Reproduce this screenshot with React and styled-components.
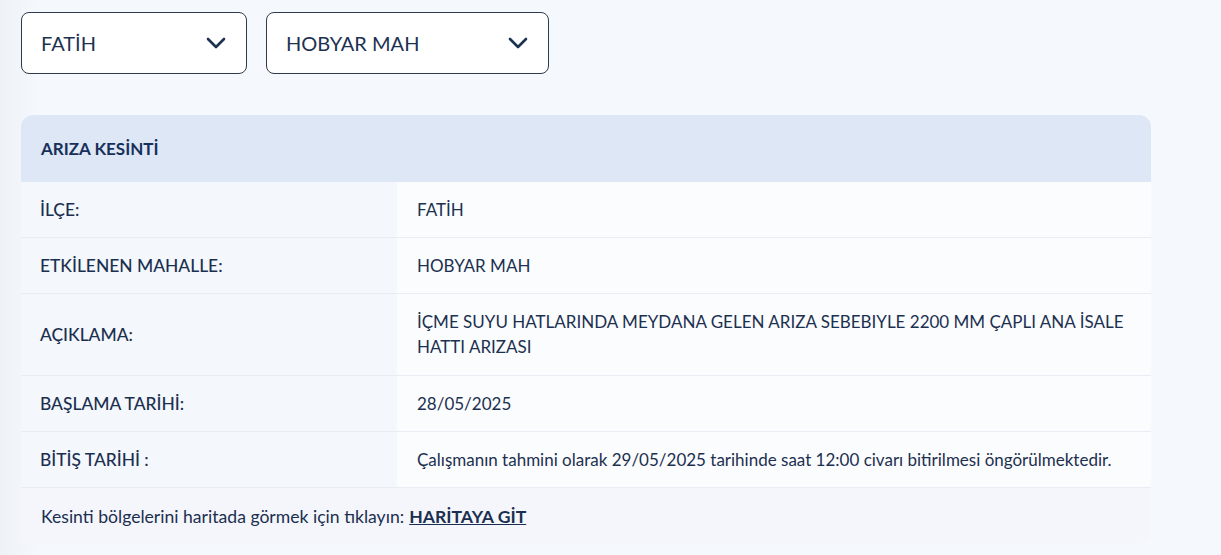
import styled, { createGlobalStyle } from 'styled-components';

const GlobalStyle = createGlobalStyle`
    body {
        margin: 0;
        background: #f5f8fc;
        font-family: Lato, "Noto Sans", sans-serif;
        color: #1c3050;
    }
`

const Page = styled.div`
    padding: 12px 21px;
    min-height: 555px;
    box-sizing: border-box;
    background: linear-gradient(90deg, #eef2f7 0, #f5f8fc 40px);
`

const Filters = styled.div`
    display: flex;
    gap: 19px;
`

const Select = styled.div`
    width: ${p => p.$width}px;
    height: 62px;
    box-sizing: border-box;
    border: 1px solid #2e3b4c;
    border-radius: 8px;
    background: #fff;
    display: flex;
    align-items: center;
    justify-content: space-between;
    padding: 0 20px 0 19px;
    font-size: 20px;
    color: #1d3251;
`

const Card = styled.div`
    margin-top: 41px;
    width: 1130px;
    border-radius: 12px;
    overflow: hidden;
    background: #fbfcfe;
`

const Header = styled.div`
    height: 67px;
    display: flex;
    align-items: center;
    padding: 0 20px;
    background: #dde7f6;
    font-weight: 700;
    font-size: 17px;
    color: #17305a;
`

const Row = styled.div`
    display: grid;
    grid-template-columns: 376px 1fr;
    min-height: 55px;
    border-bottom: 1px solid #e9edf3;
`

const Label = styled.div`
    display: flex;
    align-items: center;
    padding: 0 19px;
    background: #f4f7fb;
    font-weight: 500;
    font-size: 17.4px;
    color: #1b2f50;
`

const Value = styled.div`
    display: flex;
    align-items: center;
    padding: 15px 14px 16px 20px;
    font-size: 17px;
    line-height: 25px;
    color: #1c3050;
    ${p => p.$single && 'padding-bottom: 15px;'}
`

const Footer = styled.div`
    height: 56px;
    display: flex;
    align-items: center;
    padding: 0 20px;
    background: #f4f6fb;
    font-size: 17.6px;
    color: #1b2f50;
    a {
        margin-left: 5px;
        font-weight: 700;
        color: #1b2f50;
        text-decoration: underline;
    }
`

const Chevron = () => (
    <svg width="20" height="12" viewBox="0 0 20 12" fill="none">
        <path d="M2 2l8 8 8-8" stroke="#1d3251" strokeWidth="2.6" strokeLinecap="round" strokeLinejoin="round" />
    </svg>
)

const rows = [
    ['İLÇE:', 'FATİH'],
    ['ETKİLENEN MAHALLE:', 'HOBYAR MAH'],
    ['AÇIKLAMA:', 'İÇME SUYU HATLARINDA MEYDANA GELEN ARIZA SEBEBIYLE 2200 MM ÇAPLI ANA İSALE HATTI ARIZASI', true],
    ['BAŞLAMA TARİHİ:', '28/05/2025'],
    ['BİTİŞ TARİHİ :', 'Çalışmanın tahmini olarak 29/05/2025 tarihinde saat 12:00 civarı bitirilmesi öngörülmektedir.'],
]

export default function App() {
    return (
        <>
        <GlobalStyle/>
        <Page>
            <Filters>
                <Select $width={226}>FATİH<Chevron/></Select>
                <Select $width={283}>HOBYAR MAH<Chevron/></Select>
            </Filters>
            <Card>
                <Header>ARIZA KESİNTİ</Header>
                {rows.map(([l, v, multi]) => (
                    <Row key={l}>
                        <Label>{l}</Label>
                        <Value $single={!multi}>{v}</Value>
                    </Row>
                ))}
                <Footer>
                    Kesinti bölgelerini haritada görmek için tıklayın: <a href="#">HARİTAYA GİT</a>
                </Footer>
            </Card>
        </Page>
        </>
    )
}
